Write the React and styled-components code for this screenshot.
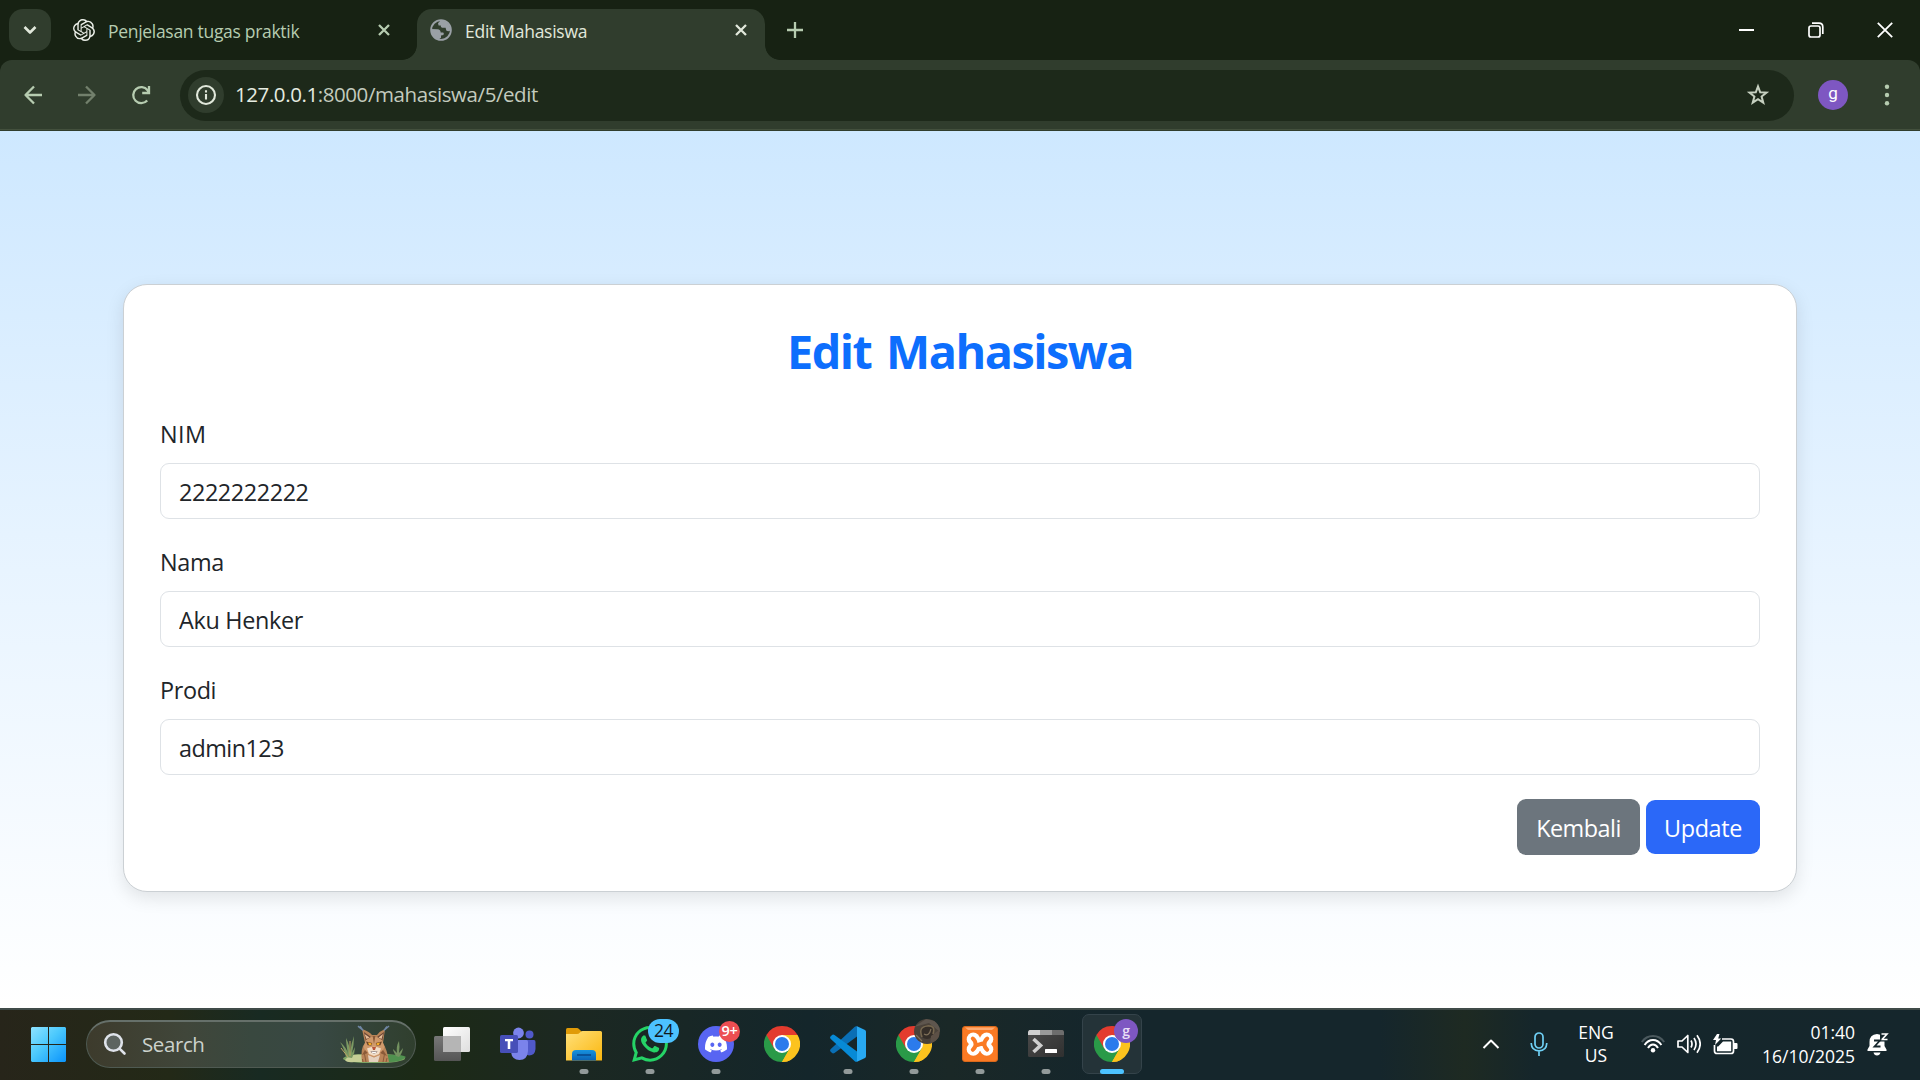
import React from "react";
import styled, { createGlobalStyle, css } from "styled-components";
import { SiOpenai, SiDiscord, SiWhatsapp } from "react-icons/si";

const GlobalStyle = createGlobalStyle`
  *, *::before, *::after { box-sizing: border-box; }
  html, body { margin: 0; padding: 0; overflow: hidden; }
  body { font-family: "Open Sans", "Noto Sans", sans-serif; }
  button, input { font: inherit; }
  svg { display: block; flex: none; }
`;

const Screen = styled.div`
  width: 1920px;
  height: 1080px;
  display: flex;
  flex-direction: column;
  overflow: hidden;
  background: #fff;
`;

/* ---------- Browser ---------- */

const TabStrip = styled.header`
  height: 60px;
  flex: none;
  display: flex;
  align-items: flex-end;
  background: #172213;
  padding-left: 9px;
`;

const TabSearch = styled.button`
  width: 42px;
  height: 42px;
  margin-bottom: 9px;
  border: 0;
  padding: 0;
  border-radius: 14px;
  background: #303d2d;
  display: grid;
  place-items: center;
`;

const Tab = styled.div`
  position: relative;
  height: 51px;
  display: flex;
  align-items: flex-start;
  padding: 10px 0 0;
  color: ${(p) => (p.$active ? "#e1e8db" : "#b6ccb0")};
  ${(p) =>
    p.$active
      ? css`
          width: 348px;
          padding-left: 13px;
          padding-right: 18px;
          background: #303d2d;
          border-radius: 15px 15px 0 0;
          &::before, &::after {
            content: "";
            position: absolute;
            bottom: 0;
            width: 15px;
            height: 15px;
          }
          &::before {
            left: -15px;
            background: radial-gradient(circle at 0 0, transparent 14.5px, #303d2d 15.2px);
          }
          &::after {
            right: -15px;
            background: radial-gradient(circle at 100% 0, transparent 14.5px, #303d2d 15.2px);
          }
        `
      : css`
          width: 366px;
          padding-left: 22px;
          padding-right: 27px;
        `}
`;

const TabTitle = styled.span`
  flex: 1;
  margin-left: 13px;
  font-size: 17.5px;
  line-height: 24px;
  white-space: nowrap;
  letter-spacing: ${(p) => p.$spacing}px;
`;

const TabClose = styled.span`
  padding-top: 5px;
`;

const NewTab = styled.span`
  height: 51px;
  padding: 12px 0 0 21px;
`;

const WindowButtons = styled.div`
  margin-left: auto;
  height: 60px;
  display: flex;
  padding-right: 1px;
`;

const WindowButton = styled.span`
  width: 69px;
  height: 59px;
  display: grid;
  place-items: center;
`;

const ToolbarBack = styled.div`
  flex: none;
  background: #172213;
`;

const Toolbar = styled.div`
  height: 71px;
  border-radius: 12px 12px 0 0;
  background: linear-gradient(#303d2d 0 69px, #43503d 69px 70px, #303d2d 70px);
  display: flex;
  align-items: center;
  padding: 0 22px 1px 22px;
`;

const NavIcon = styled.span`
  width: 24px;
  height: 24px;
  margin-right: ${(p) => p.$gap || 0}px;
  display: grid;
  place-items: center;
`;

const AddressBar = styled.div`
  width: 1614px;
  height: 51px;
  border-radius: 26px;
  background: #1d291a;
  display: flex;
  align-items: center;
  padding: 0 24px 0 8px;
`;

const SiteInfo = styled.span`
  width: 36px;
  height: 36px;
  border-radius: 50%;
  background: #303d2d;
  display: grid;
  place-items: center;
`;

const Url = styled.span`
  flex: 1;
  margin-left: 11px;
  padding-bottom: 2px;
  font-size: 20.5px;
  line-height: 28px;
  letter-spacing: -0.42px;
  color: #c3cbbe;
  b { font-weight: 400; color: #e6ece1; }
`;

const Avatar = styled.span`
  width: 30px;
  height: 30px;
  margin: 0 36px 0 24px;
  border-radius: 50%;
  background: #7e57c2;
  color: #fff;
  font: 17px/27px Roboto, sans-serif;
  text-align: center;
`;

/* ---------- Page ---------- */

const Page = styled.main`
  flex: 1;
  display: flex;
  justify-content: center;
  align-items: flex-start;
  padding-top: 153px;
  background: linear-gradient(to bottom, #cee8ff, #e8f4ff 50%, #ffffff);
`;

const Card = styled.form`
  width: 1674px;
  height: 608px;
  border: 1px solid #cbd0d4;
  border-radius: 24px;
  background: #fff;
  box-shadow: 0 6px 18px rgba(0, 0, 0, 0.1);
  padding: 37px 36px 0 36px;
`;

const Heading = styled.h1`
  margin: 0 0 36px;
  font-size: 46.8px;
  font-weight: 700;
  line-height: 58px;
  letter-spacing: -1.5px;
  word-spacing: 4px;
  text-align: center;
  color: #0d6efd;
`;

const Field = styled.label`
  display: block;
  height: 103px;
  margin-bottom: 25px;
  color: #212529;
  font-size: 23.4px;
  line-height: 36px;
`;

const FieldLabel = styled.span`
  display: block;
  margin-bottom: 11px;
  letter-spacing: ${(p) => p.$spacing}px;
`;

const Input = styled.input`
  display: block;
  width: 1600px;
  height: 56px;
  padding: 2px 18px 0;
  border: 1px solid #dee2e6;
  border-radius: 9px;
  background: #fff;
  color: #212529;
  letter-spacing: ${(p) => p.$spacing}px;
  outline: none;
`;

const Actions = styled.div`
  display: flex;
  justify-content: flex-end;
  align-items: center;
  gap: 6px;
  margin-top: -1px;
`;

const Button = styled.button`
  border: 0;
  padding: 2px 0 0;
  border-radius: 9px;
  color: #fff;
  font-size: 23.4px;
  line-height: 36px;
  width: ${(p) => (p.$primary ? 114 : 123)}px;
  height: ${(p) => (p.$primary ? 54 : 56)}px;
  background: ${(p) => (p.$primary ? "#2b68f8" : "#6c757d")};
  letter-spacing: ${(p) => (p.$primary ? -0.35 : -0.5)}px;
`;

/* ---------- Taskbar ---------- */

const Taskbar = styled.footer`
  height: 72px;
  flex: none;
  display: flex;
  align-items: center;
  padding: 0 31px 0 15px;
  border-top: 2px solid #404b49;
  background: linear-gradient(
    90deg, #27251a 0, #232917 170px, #182a22 260px, #1c2a16 425px,
    #1c2821 560px, #14262b 810px, #1a2827 950px, #15262c 1100px,
    #15262c 1380px, #1e2a22 1465px, #15262b 1535px, #15262c 100%
  );
`;

const AppSlot = styled.span`
  position: relative;
  width: 66px;
  height: 70px;
  display: grid;
  place-items: center;
  padding-bottom: 2px;
`;

const ActiveTile = styled.span`
  width: 60px;
  height: 60px;
  border-radius: 7px;
  border: 1px solid #34434a;
  background: #243338;
  display: grid;
  place-items: center;
`;

const Indicator = styled.i`
  position: absolute;
  bottom: 6px;
  left: 50%;
  transform: translateX(-50%);
  width: ${(p) => (p.$active ? 24 : 9)}px;
  height: 5px;
  border-radius: 3px;
  background: ${(p) => (p.$active ? "#4cc2ff" : "#929a9a")};
`;

const CountBadge = styled.b`
  position: absolute;
  left: ${(p) => p.$left}px;
  top: ${(p) => p.$top}px;
  width: ${(p) => p.$w}px;
  height: ${(p) => p.$h}px;
  border-radius: 13px;
  background: ${(p) => p.$bg};
  color: ${(p) => p.$fg};
  font-size: ${(p) => p.$size}px;
  line-height: ${(p) => p.$h - 1}px;
  font-weight: ${(p) => p.$weight || 400};
  text-align: center;
  letter-spacing: -0.4px;
`;

const SearchBox = styled.div`
  width: 330px;
  height: 48px;
  margin: 0 3px 3px 5px;
  padding: 0 7px 0 16px;
  border-radius: 24px;
  border: 1px solid #4f5a52;
  border-top: 2px solid #66706a;
  background: linear-gradient(90deg, #3d3b2c, #40463a 30%, #39483f 50%, #384843 70%, #303f2e);
  display: flex;
  align-items: center;
`;

const SearchText = styled.span`
  flex: 1;
  margin-left: 15px;
  font-size: 20.5px;
  line-height: 28px;
  letter-spacing: -0.4px;
  color: #ccd2cd;
`;

const Tray = styled.div`
  margin-left: auto;
  display: flex;
  align-items: center;
  height: 70px;
  padding-bottom: 2px;
  color: #fff;
`;

const TrayText = styled.div`
  width: ${(p) => p.$w}px;
  margin-right: ${(p) => p.$gap}px;
  padding-bottom: 1px;
  text-align: ${(p) => p.$align};
  font-size: 17.5px;
  line-height: ${(p) => p.$line}px;
  white-space: nowrap;
`;

const TrayIcon = styled.span`
  margin-right: ${(p) => p.$gap}px;
`;

/* ---------- Drawings ---------- */

const Stroke = ({ w = 24, h = w, box, width = 2, color, children, cap = "butt" }) => (
  <svg width={w} height={h} viewBox={box || `0 0 ${w} ${h}`} fill="none" stroke={color} strokeWidth={width} strokeLinecap={cap} strokeLinejoin="round">
    {children}
  </svg>
);

const Globe = () => (
  <svg width="22" height="22" viewBox="0 0 22 22">
    <circle cx="11" cy="11" r="9.9" fill="#303d2d" stroke="#9aa0a6" strokeWidth="1.8" />
    <path d="M8 4.3 Q10 1 13 1.3 Q20.5 4 20.5 11.5 Q18 13 16.3 11.4 L15.6 8.8 H12.2 Q10.4 8.4 10.8 6.6 L8.6 6.4 Z" fill="#9aa0a6" />
    <path d="M1.2 10 L7.6 10.2 Q10.6 10.6 10.7 13.4 H13.2 Q14.4 14 13.4 16 L11 16.6 V18.8 L8.6 20.6 Q1.6 18.6 1.2 10Z" fill="#9aa0a6" />
  </svg>
);

const Close = ({ color }) => (
  <Stroke w={12} width={2.3} color={color}>
    <path d="M1 1 11 11M11 1 1 11" />
  </Stroke>
);

const Chrome = () => (
  <svg width="36" height="36" viewBox="0 0 36 36">
    <path d="M18 18 2.41 9A18 18 0 0 1 33.59 9Z" fill="#e33b2e" />
    <path d="M18 18 33.59 9A18 18 0 0 1 18 36Z" fill="#fcc31e" />
    <path d="M18 18 18 36A18 18 0 0 1 2.41 9Z" fill="#2a9a48" />
    <path d="M18 9H33.59L25.8 22.5 18 18Z" fill="#fcc31e" />
    <path d="M25.8 22.5 18 36 10.2 31.5 18 18Z" fill="#2a9a48" />
    <path d="M25.8 22.5 18 36Q24 36 27 33.5L30 22Z" fill="#fcc31e" />
    <path d="M10.2 22.5 2.41 9 10 4 18 9V18Z" fill="#e33b2e" />
    <circle cx="18" cy="18" r="9" fill="#fff" />
    <circle cx="18" cy="18" r="7" fill="#2b7bec" />
  </svg>
);

const Windows = () => (
  <svg width="35" height="35" viewBox="0 0 35 35">
    <defs>
      <linearGradient id="win" gradientUnits="userSpaceOnUse" x1="0" y1="0" x2="35" y2="35">
        <stop offset="0" stopColor="#8fe3ff" />
        <stop offset=".45" stopColor="#4cc9fd" />
        <stop offset="1" stopColor="#0a93fb" />
      </linearGradient>
    </defs>
    <path fill="url(#win)" d="M1 0H17V17H0V1ZM18 0H34L35 1V17H18ZM0 18H17V35H1L0 34ZM18 18H35V34L34 35H18Z" />
  </svg>
);

const Lynx = () => (
  <svg width="68" height="38" viewBox="0 0 68 38">
    <ellipse cx="34" cy="33.5" rx="31" ry="4.8" fill="#7da465" />
    <path d="M5 35Q10 28 24 30L22 37H14Q7 38 5 35Z" fill="#c6cf96" />
    <path d="M44 30Q62 29 66 32Q61 37 49 37Z" fill="#50924f" />
    <path d="M6 32Q4 23 0 17Q7 23 8 29Q6 19 6 13Q10 21 10 28Q11 19 14 11Q14 20 12 28L15 22Q15 28 12 33Z" fill="#7c9a63" />
    <path d="M1 23 8 32M10 16V31" stroke="#bba465" fill="none" />
    <path d="M56 31Q53 26 53 24L57 28Q56 21 59 16Q60 22 59 28L63 23Q62 29 59 32Z" fill="#739260" />
    <path d="M22 37Q20 23 25 18L22 4Q30 7 32 10H37Q40 6 45 4L43 18Q47 24 49 37Z" fill="#b98458" />
    <path d="M24 7 31 12 26 17ZM44 7 37 12 42 17Z" fill="#6b4736" />
    <path d="M26.5 14 24.5 9 29.5 12.5ZM41.5 14 43 9 38.5 12.5Z" fill="#e6bd97" />
    <path d="M22 4.5 18 1.2M23 5.5 20 1.2M45 4.5 49 1M44 5.5 47 1.5" stroke="#7087a5" strokeWidth="1.5" />
    <path d="M26 15Q34 8 42 15L44.5 22Q41 31 34 32Q27 31 23.5 22Z" fill="#d09a6c" />
    <path d="M32.6 11 34 19 35.4 11ZM25 25 22 30 28 28ZM43 25 47 31 40 28Z" fill="#8a5a38" />
    <path d="M27 23.5Q34 20 41 23.5L39 29 34 31 29 29Z" fill="#f2dec8" />
    <path d="M26 16.5 32.2 18 31.5 20.6 27.6 20.2ZM42 16.5 35.8 18 36.5 20.6 40.4 20.2Z" fill="#6d4528" />
    <path d="M28 17.4 31.4 18.3V20.1H29ZM40 17.4 36.6 18.3V20.1H39Z" fill="#f8ae24" />
    <path d="M32 22H36L35 25H33Z" fill="#b85438" />
    <path d="M30.5 26.5Q34 25.6 37.5 26.5Q34 30.4 30.5 26.5Z" fill="#3e251d" />
    <path d="M31 26.4H37L35.4 28.2H32.6Z" fill="#fff" />
    <path d="M28 30 34 32.5 40 30 38 37H29Z" fill="#e5d1bf" />
    <path d="M24.5 29 26 37M44.5 29 43 37M22.5 34 23 37M47 33 46 37" stroke="#8a5a38" fill="none" />
  </svg>
);

const TaskView = () => (
  <svg width="36" height="36" viewBox="0 0 36 36">
    <defs>
      <linearGradient id="tv1" x2="0" y2="1"><stop stopColor="#777" /><stop offset="1" stopColor="#555" /></linearGradient>
      <linearGradient id="tv2" x2="1" y2="1"><stop stopColor="#fff" /><stop offset="1" stopColor="#dedede" /></linearGradient>
    </defs>
    <rect x="0" y="10" width="27" height="25" rx="1.5" fill="url(#tv1)" />
    <rect x="9" y="1" width="27" height="25" rx="1.5" fill="url(#tv2)" />
    <path d="M9 10H27V26H10L9 25Z" fill="#b5b5b5" />
  </svg>
);

const Teams = () => (
  <svg width="36" height="36" viewBox="0 0 36 36">
    <circle cx="18.5" cy="7" r="5.4" fill="#7b83eb" />
    <circle cx="29.5" cy="8.5" r="4" fill="#5059c9" />
    <path d="M25 14H34Q35.5 14 35.5 16V23Q35 29.5 29 29.5L25 28Z" fill="#5059c9" />
    <path d="M12 14H26.5Q28 14 28 16V25Q27.5 34 19.5 34Q12 34 11 26Z" fill="#7b83eb" />
    <rect x="0" y="9" width="18" height="18" rx="1.6" fill="#474fb8" />
    <path d="M5 13H13V15.3H10.3V23H7.7V15.3H5Z" fill="#fff" />
  </svg>
);

const Explorer = () => (
  <svg width="36" height="36" viewBox="0 0 36 36">
    <defs>
      <linearGradient id="fold" x2="1" y2="1"><stop stopColor="#ffe07a" /><stop offset="1" stopColor="#fbb70f" /></linearGradient>
      <linearGradient id="foldb" x2="0" y2="1"><stop stopColor="#1793df" /><stop offset="1" stopColor="#0b62b4" /></linearGradient>
    </defs>
    <path d="M0 3.5Q0 2 1.5 2H11Q12 2 13 3L15.5 5.5V9H0Z" fill="#e09b08" />
    <path d="M0 8H11Q12.5 8 14 6.5Q15 5 16.5 5H34.5Q36 5 36 6.5V34.5H0Z" fill="url(#fold)" />
    <path d="M6 34.5V28Q6 24 10 24H26Q30 24 30 28V34.5Z" fill="url(#foldb)" />
    <path d="M11 29H25" stroke="#0a4f94" strokeWidth="1.8" />
  </svg>
);

const VSCode = () => (
  <svg width="36" height="36" viewBox="0 0 36 36">
    <path d="M27 0.5V10.5L4.5 27Q3 28 1.8 26.8L.5 25.5Q-.5 24.3 .8 23L24.5 1Q26 -.4 27 .5Z" fill="#0a6fb5" />
    <path d="M27 35.5V25.5L4.5 9Q3 8 1.8 9.2L.5 10.5Q-.5 11.7 .8 13L24.5 35Q26 36.4 27 35.5Z" fill="#078ad6" />
    <path d="M26.5 0 35 4Q36 4.6 36 5.8V30.2Q36 31.4 35 32L26.5 36Q27 35.4 27 34V2Q27 .7 26.5 0Z" fill="#28a9f2" />
  </svg>
);

const Terminal = () => (
  <svg width="36" height="36" viewBox="0 0 36 36">
    <defs><linearGradient id="term" x2="1" y2="1"><stop stopColor="#4b4b4b" /><stop offset="1" stopColor="#303030" /></linearGradient></defs>
    <rect y="4" width="36" height="27" rx="1.5" fill="url(#term)" />
    <path d="M1.5 4H12V9H0V5.5Z" fill="#cfcfcf" />
    <path d="M12 4H24V9H12Z" fill="#999" />
    <path d="M24 4H34.5L36 5.5V9H24Z" fill="#6d6d6d" />
    <path d="M5.5 13 12.5 19.5 5.5 26" stroke="#cfcfcf" strokeWidth="3.6" fill="none" />
    <rect x="17" y="23" width="12" height="4" rx=".6" fill="#fff" />
  </svg>
);

const Xampp = () => (
  <svg width="36" height="36" viewBox="0 0 36 36">
    <rect x=".5" y=".5" width="35" height="35" rx="2.5" fill="#fa7a24" stroke="#d9691c" />
    <path d="M3 1.5H33L30 4H6Z" fill="#ffab72" />
    <g fill="#fff">
      <circle cx="11.3" cy="13.2" r="6.6" />
      <circle cx="24.7" cy="13.2" r="6.6" />
      <circle cx="11.3" cy="23.2" r="6.6" />
      <circle cx="24.7" cy="23.2" r="6.6" />
      <path d="M9 11.5H27V25H9Z" />
    </g>
    <path d="M10.8 12.6Q13.6 15 13.6 18.2T10.8 23.8M25.2 12.6Q22.4 15 22.4 18.2T25.2 23.8M13.6 19.6 22.4 16.8" fill="none" stroke="#fa7a24" strokeWidth="4" strokeLinecap="round" />
    <path d="M15.6 13.2H20.2V15H15.6ZM15.6 21.4H20.2V23.2H15.6Z" fill="#fff" />
  </svg>
);

const PhotoBadge = styled.span`
  position: absolute;
  left: 33px;
  top: 9px;
  width: 26px;
  height: 25px;
  border-radius: 50%;
  overflow: hidden;
  background: #4a423a;
`;

const Photo = () => (
  <svg width="26" height="25" viewBox="0 0 26 25">
    <path d="M0 8 12 0 26 3V13L15 4Z" fill="#5e564e" />
    <circle cx="13" cy="13" r="7" fill="#352e28" />
    <path d="M8 18Q4 8 13 7T19 15" stroke="#75674f" strokeWidth="1.6" fill="none" />
    <path d="M10 15Q15 18 17 10M2 16 8 22" stroke="#7f7059" strokeWidth="1.2" fill="none" />
    <path d="M17 17 25 11V20L16 25Z" fill="#5c5046" />
  </svg>
);

const fields = [
  { label: "NIM", value: "2222222222", labelSpacing: 0.4, spacing: -0.42 },
  { label: "Nama", value: "Aku Henker", labelSpacing: -0.35, spacing: -0.32 },
  { label: "Prodi", value: "admin123", labelSpacing: -0.35, spacing: -0.55 },
];

export default function App() {
  return (
    <Screen>
      <GlobalStyle />
      <TabStrip>
        <TabSearch>
          <Stroke w={14} h={10} width={2.6} color="#e1e8db"><path d="M1.5 2 7 7.5 12.5 2" /></Stroke>
        </TabSearch>
        <Tab>
          <SiOpenai size={22} color="#e9ede6" />
          <TabTitle $spacing={-0.3}>Penjelasan tugas praktik</TabTitle>
          <TabClose><Close color="#b6ccb0" /></TabClose>
        </Tab>
        <Tab $active>
          <Globe />
          <TabTitle $spacing={-0.27}>Edit Mahasiswa</TabTitle>
          <TabClose><Close color="#e1e8db" /></TabClose>
        </Tab>
        <NewTab>
          <Stroke w={18} width={2.3} color="#b6ccb0"><path d="M9 1V17M1 9H17" /></Stroke>
        </NewTab>
        <WindowButtons>
          <WindowButton><Stroke w={15} h={4} width={2} color="#fff"><path d="M0 2H15" /></Stroke></WindowButton>
          <WindowButton>
            <Stroke w={16} width={1.7} color="#fff"><rect x="1" y="4" width="11" height="11" rx="2" /><path d="M4 1.2H11Q14.8 1.2 14.8 5V12" /></Stroke>
          </WindowButton>
          <WindowButton><Stroke w={16} width={1.8} color="#fff"><path d="M.8 .8 15.2 15.2M15.2 .8 .8 15.2" /></Stroke></WindowButton>
        </WindowButtons>
      </TabStrip>

      <ToolbarBack>
        <Toolbar>
          <NavIcon $gap={30}>
            <Stroke color="#b6ccb0" width={2.3}><path d="M20 12H3.5M12 3.5 3.5 12 12 20.5" /></Stroke>
          </NavIcon>
          <NavIcon $gap={30}>
            <Stroke color="#72806c" width={2.3}><path d="M2 12H18.5M10 3.5 18.5 12 10 20.5" /></Stroke>
          </NavIcon>
          <NavIcon $gap={26}>
            <Stroke color="#b6ccb0" width={2.3}><path d="M17.2 17.5A8 8 0 1 1 17.6 7.3L19 9.5M19 3V10H12.2" strokeLinejoin="miter" /></Stroke>
          </NavIcon>
          <AddressBar>
            <SiteInfo>
              <Stroke w={22} width={2.1} color="#e1e8db"><circle cx="11" cy="11" r="9" /><path d="M11 10V15.5M11 6.2V8.4" /></Stroke>
            </SiteInfo>
            <Url><b>127.0.0.1</b>:8000/mahasiswa/5/edit</Url>
            <Stroke w={24} width={2} color="#c6d0c0">
              <path strokeLinejoin="miter" d="M12 3.4 14.2 9.3 20.5 9.6 15.6 13.5 17.3 19.7 12 16.2 6.7 19.7 8.4 13.5 3.5 9.6 9.8 9.3Z" />
            </Stroke>
          </AddressBar>
          <Avatar>g</Avatar>
          <svg width="6" height="24" viewBox="0 0 6 24" fill="#b6ccb0">
            <circle cx="3" cy="3.8" r="2.2" /><circle cx="3" cy="12" r="2.2" /><circle cx="3" cy="20.2" r="2.2" />
          </svg>
        </Toolbar>
      </ToolbarBack>

      <Page>
        <Card>
          <Heading>Edit Mahasiswa</Heading>
          {fields.map((f) => (
            <Field key={f.label}>
              <FieldLabel $spacing={f.labelSpacing}>{f.label}</FieldLabel>
              <Input defaultValue={f.value} $spacing={f.spacing} />
            </Field>
          ))}
          <Actions>
            <Button type="button">Kembali</Button>
            <Button type="button" $primary>Update</Button>
          </Actions>
        </Card>
      </Page>

      <Taskbar>
        <AppSlot><Windows /></AppSlot>
        <SearchBox>
          <Stroke w={24} width={2.6} color="#dfe3ea" cap="round"><circle cx="10.5" cy="10.5" r="8.3" fill="#5d6460" /><path d="M16.8 16.8 21.5 21.5" /></Stroke>
          <SearchText>Search</SearchText>
          <Lynx />
        </SearchBox>
        <AppSlot><TaskView /></AppSlot>
        <AppSlot><Teams /></AppSlot>
        <AppSlot><Explorer /><Indicator /></AppSlot>
        <AppSlot>
          <SiWhatsapp size={36} color="#25d366" />
          <CountBadge $left={31} $top={9} $w={31} $h={24} $bg="#4cc2ff" $fg="#10181c" $size={17.5}>24</CountBadge>
          <Indicator />
        </AppSlot>
        <AppSlot>
          <svg width="36" height="36" viewBox="0 0 36 36">
            <circle cx="18" cy="18" r="18" fill="#5865f2" />
            <g transform="translate(7 7)"><SiDiscord size={22} color="#fff" /></g>
          </svg>
          <CountBadge $left={36} $top={11} $w={21} $h={21} $bg="#ec4e52" $fg="#fff" $size={14.5} $weight={600}>9+</CountBadge>
          <Indicator />
        </AppSlot>
        <AppSlot><Chrome /></AppSlot>
        <AppSlot><VSCode /><Indicator /></AppSlot>
        <AppSlot><Chrome /><PhotoBadge><Photo /></PhotoBadge><Indicator /></AppSlot>
        <AppSlot><Xampp /><Indicator /></AppSlot>
        <AppSlot><Terminal /><Indicator /></AppSlot>
        <AppSlot>
          <ActiveTile><Chrome /></ActiveTile>
          <CountBadge $left={35} $top={9} $w={24} $h={24} $bg="#7e57c2" $fg="#e8def6" $size={14} $weight={600}>g</CountBadge>
          <Indicator $active />
        </AppSlot>

        <Tray>
          <TrayIcon $gap={30}><Stroke w={18} h={10} width={2} color="#fff"><path d="M1.5 9 9 1.5 16.5 9" /></Stroke></TrayIcon>
          <TrayIcon $gap={29}>
            <Stroke w={18} h={24} width={1.7} color="#6fd0f5"><rect x="5" y="1" width="8" height="15" rx="4" /><path d="M1.2 11Q1.5 18.8 9 18.8T16.8 11M9 19V24" /></Stroke>
          </TrayIcon>
          <TrayText $w={38} $gap={26} $align="center" $line={23}>ENG<br />US</TrayText>
          <TrayIcon $gap={12}>
            <Stroke w={24} h={18} width={2} color="#fff">
              <path d="M.8 7Q5 1 12 1T23.2 7" stroke="#4b595e" />
              <path d="M3.6 10Q7 5 12 5T20.4 10M7 13Q9 9.6 12 9.6T17 13" />
              <circle cx="12" cy="15.2" r="2.2" fill="#fff" stroke="none" />
            </Stroke>
          </TrayIcon>
          <TrayIcon $gap={12}>
            <Stroke w={24} h={20} width={1.7} color="#fff">
              <path d="M1 7H5L10.8 1.5V18.5L5 13H1ZM14 6.5Q16 10 14 13.5M17 4Q21 10 17 16M20 1.2Q26.4 10 20 18.8" />
            </Stroke>
          </TrayIcon>
          <TrayIcon $gap={24}>
            <svg width="25" height="21" viewBox="0 0 25 21">
              <path d="M9 5H18Q20.5 5 20.5 7.5V17Q20.5 19.5 18 19.5H4Q1.5 19.5 1.5 17V11" fill="none" stroke="#fff" strokeWidth="1.7" />
              <path d="M21 9H23.5Q24.5 9 24.5 10V14Q24.5 15 23.5 15H21Z" fill="#fff" />
              <path d="M10 7.4H18.2V17.2H4V12.5H5.2Z" fill="#fff" />
              <path d="M4 0 0 6H3L2 11 8.2 4.5H5.2L6.5 0Z" fill="#fff" />
            </svg>
          </TrayIcon>
          <TrayText $w={93} $gap={12} $align="right" $line={24}>01:40<br />16/10/2025</TrayText>
          <svg width="22" height="24" viewBox="0 0 22 24">
            <path d="M10 2Q17.5 2.5 17.5 10V14L19.5 17.5V19H.5V17.5L2.5 14V10Q2.5 2.5 10 2ZM6.5 20.5H13.5Q12.8 23.5 10 23.5T6.5 20.5Z" fill="#fff" />
            <path d="M13 0H22V9.5H13Z" fill="#15262c" />
            <path d="M14.5 2H20L15 7.5H20.5" stroke="#fff" strokeWidth="1.6" fill="none" />
            <path d="M7 8.5H13L7.5 14.5H13.5" stroke="#15262c" strokeWidth="1.8" fill="none" />
          </svg>
        </Tray>
      </Taskbar>
    </Screen>
  );
}
